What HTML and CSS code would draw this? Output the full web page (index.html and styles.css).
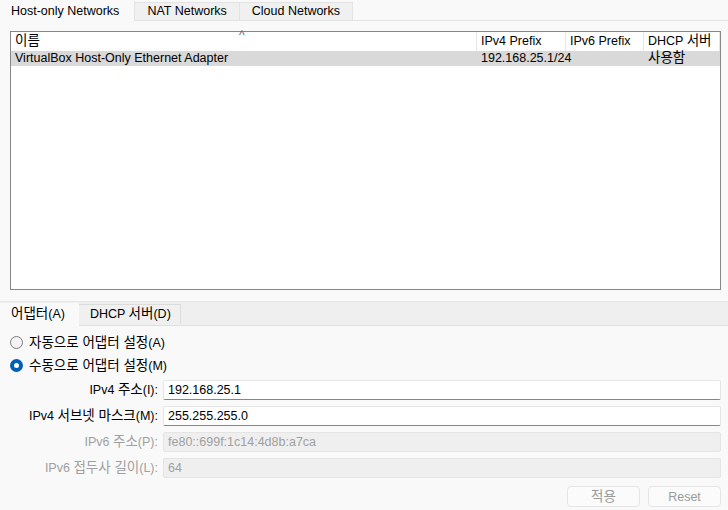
FILE: index.html
```html
<!DOCTYPE html>
<html lang="ko">
<head>
    <meta charset="UTF-8">
    <title>Host-only Networks</title>
    <link rel="stylesheet" href="styles.css">
</head>
<body>
    <div class="tabs">
        <div class="tab active">Host-only Networks</div>
        <div class="tab">NAT Networks</div>
        <div class="tab">Cloud Networks</div>
    </div>

    <div class="list">
        <div class="list-head">
            <div class="col name"><span class="ko">이름</span><span class="sort">^</span></div>
            <div class="col">IPv4 Prefix</div>
            <div class="col">IPv6 Prefix</div>
            <div class="col">DHCP <span class="ko">서버</span></div>
        </div>
        <div class="list-row selected">
            <div class="col name">VirtualBox Host-Only Ethernet Adapter</div>
            <div class="col">192.168.25.1/24</div>
            <div class="col"></div>
            <div class="col ko">사용함</div>
        </div>
    </div>

    <div class="subtabs">
        <div class="subtab active"><span class="ko">어댑터</span>(A)</div>
        <div class="subtab">DHCP <span class="ko">서버</span>(D)</div>
    </div>

    <div class="details">
        <label class="radio"><span class="dot"></span><span><span class="ko">자동으로 어댑터 설정</span>(A)</span></label>
        <label class="radio"><span class="dot on"></span><span><span class="ko">수동으로 어댑터 설정</span>(M)</span></label>

        <div class="fields">
            <div class="label">IPv4 <span class="ko">주소</span>(I):</div>
            <div class="field">192.168.25.1</div>
            <div class="label">IPv4 <span class="ko">서브넷 마스크</span>(M):</div>
            <div class="field">255.255.255.0</div>
            <div class="label off">IPv6 <span class="ko">주소</span>(P):</div>
            <div class="field off">fe80::699f:1c14:4d8b:a7ca</div>
            <div class="label off">IPv6 <span class="ko">접두사 길이</span>(L):</div>
            <div class="field off">64</div>
        </div>

        <div class="buttons">
            <button class="ko">적용</button>
            <button>Reset</button>
        </div>
    </div>
</body>
</html>
```

FILE: styles.css
```css
body { margin: 0; background: #f9f9f9; font-family: "Liberation Sans", "Noto Sans CJK KR", sans-serif; font-size: 12.5px; color: #000; }
.ko { font-size: 13.5px; line-height: 1; }

.tabs { display: flex; height: 20px; border-bottom: 1px solid #e3e3e3; }
.tab { padding: 0 12px; margin-top: 2px; line-height: 17px; background: #f0f0f0; border: 1px solid #e3e3e3; border-bottom: none; border-left: none; }
.tab.active { margin-top: 0; line-height: 21px; background: #f9f9f9; padding: 0 15px 0 11px; position: relative; top: 1px; height: 20px; border-top: none; }

.list { margin: 10px 7px 0 10px; height: 257px; border: 1px solid #868686; background: #fff; }
.list-head, .list-row { display: grid; grid-template-columns: 466px 89px 78px 1fr; }
.list-head { height: 19px; line-height: 19px; }
.list-head .col { border-right: 1px solid #e5e5e5; position: relative; }
.list-row { height: 15px; line-height: 15px; }
.list-row.selected { background: #d9d9d9; }
.col { padding-left: 4px; white-space: nowrap; }
.sort { position: absolute; left: 228px; top: -3px; color: #666; font-size: 12px; line-height: 12px; }

.subtabs { display: flex; margin-top: 11px; height: 23px; background: #efefef; border-top: 1px solid #e6e6e6; border-bottom: 1px solid #e0e0e0; }
.subtab { padding: 0 9px 0 11px; margin-top: 2px; height: 19px; line-height: 19px; border: 1px solid #dcdcdc; border-left: none; border-bottom: none; background: #f0f0f0; }
.subtab.active { margin-top: 1px; height: 23px; line-height: 22px; padding: 0 14px 0 11px; background: #f9f9f9; border: none; }

.details { padding: 5px 7px 0 10px; }
.radio { display: flex; align-items: center; gap: 6px; height: 23px; }
.dot { width: 11px; height: 11px; border: 1px solid #7a7a7a; border-radius: 50%; background: #f3f3f3; box-sizing: content-box; }
.dot.on { width: 5px; height: 5px; border: 4px solid #005fb8; background: #fff; }

.fields { display: grid; grid-template-columns: 148px 1fr; grid-auto-rows: 20px; row-gap: 6px; column-gap: 5px; margin-top: 3px; align-items: center; }
.label { text-align: right; white-space: nowrap; line-height: 20px; }
.label.off { color: #a0a0a0; }
.field { height: 18px; line-height: 18px; padding-left: 4px; background: #fff; border: 1px solid #e5e5e5; border-bottom-color: #868686; border-radius: 2px; }
.field.off { background: #efefef; color: #a0a0a0; border-bottom-color: #e5e5e5; }

.buttons { display: flex; justify-content: flex-end; gap: 8px; margin-top: 8px; }
button { width: 73px; height: 21px; padding: 0; font-family: inherit; font-size: 12.5px; color: #9a9a9a; background: #fbfbfb; border: 1px solid #e5e5e5; border-radius: 4px; }
button.ko { font-size: 13.5px; }
```
